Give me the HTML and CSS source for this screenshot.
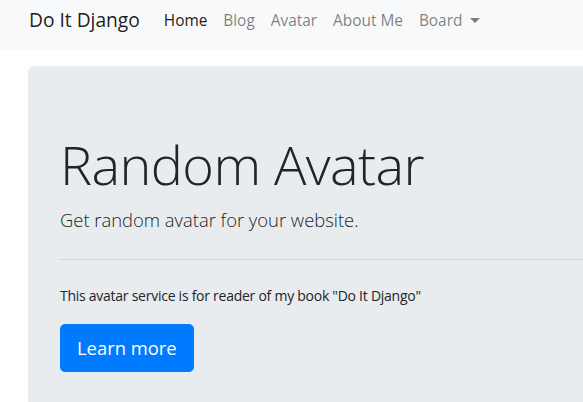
FILE: index.html
```html
<!DOCTYPE html>
<html lang="en">
<head>
<meta charset="utf-8">
<title>Random Avatar</title>
<link rel="stylesheet" href="styles.css">
</head>
<body>
<nav class="navbar">
  <a class="brand" href="#">Do It Django</a>
  <ul class="nav">
    <li><a class="nav-link active" href="#">Home</a></li>
    <li><a class="nav-link" href="#">Blog</a></li>
    <li><a class="nav-link" href="#">Avatar</a></li>
    <li><a class="nav-link" href="#">About Me</a></li>
    <li><a class="nav-link dropdown" href="#">Board<span class="caret"></span></a></li>
  </ul>
</nav>
<main class="container">
  <section class="jumbotron">
    <h1 class="display">Random Avatar</h1>
    <p class="lead">Get random avatar for your website.</p>
    <hr class="divider">
    <p class="text">This avatar service is for reader of my book "Do It Django"</p>
    <a class="btn" href="#">Learn more</a>
  </section>
</main>
</body>
</html>
```
FILE: styles.css
```css
* { box-sizing: border-box; }
html, body { margin: 0; padding: 0; overflow: hidden; }
body {
  font-family: "Open Sans", "Noto Sans", sans-serif;
  font-size: 16px;
  line-height: 1.5;
  color: #212529;
  background: #fff;
  width: 583px;
  height: 402px;
}
a { text-decoration: none; }
.navbar {
  display: flex;
  align-items: center;
  height: 49px;
  padding: 0 16px 8px 29px;
  background: #f8f9fa;
}
.brand {
  font-size: 19.2px;
  color: rgba(0,0,0,.9);
  margin-right: 24px;
  white-space: nowrap;
}
.nav {
  display: flex;
  list-style: none;
  margin: 0;
  padding: 0;
  white-space: nowrap;
}
.nav-link {
  display: block;
  padding: 8px 8px;
  font-size: 15.4px;
  color: rgba(0,0,0,.5);
}
.nav li:first-child .nav-link { padding-left: 0; }
.nav-link.active { color: rgba(0,0,0,.9); }
.caret {
  display: inline-block;
  margin-left: 8px;
  vertical-align: 3px;
  border-top: 5px solid rgba(0,0,0,.5);
  border-left: 5px solid transparent;
  border-right: 5px solid transparent;
}
.container {
  padding: 17px 0 0 28px;
}
.jumbotron {
  width: 1000px;
  background: #e9ecef;
  border-radius: 6px;
  padding: 66px 32px 64px;
}
.display {
  margin: 0 0 9px;
  font-size: 54px;
  font-weight: 300;
  line-height: 1.2;
  letter-spacing: -0.6px;
}
.lead {
  margin: 0 0 16px;
  font-size: 18.4px;
  font-weight: 300;
  line-height: 1.5;
}
.divider {
  width: 523px;
  margin: 26px 0 25px;
  border: 0;
  border-top: 1px solid rgba(0,0,0,.1);
}
.text {
  margin: 0 0 18px;
  font-size: 14px;
  letter-spacing: -0.26px;
}
.btn {
  display: inline-block;
  padding: 8px 16px;
  font-size: 18.4px;
  line-height: 1.6;
  color: #fff;
  background: #007bff;
  border: 1px solid #007bff;
  border-radius: 4.8px;
}
```
